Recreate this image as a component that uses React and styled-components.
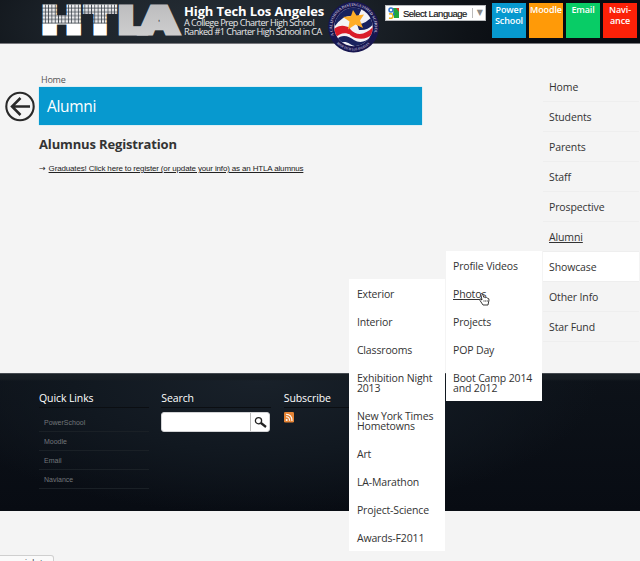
import React from "react";
import styled, { createGlobalStyle, css } from "styled-components";

const Global = createGlobalStyle`
  * { box-sizing: border-box; }
  html, body { margin: 0; padding: 0; overflow: hidden; }
  body { font-family: "Open Sans", "Noto Sans", sans-serif; color: #333; background: #f4f4f4; }
  ul { list-style: none; margin: 0; padding: 0; }
  h1, h2, h3, p { margin: 0; font-weight: 400; }
  a { color: inherit; text-decoration: none; }
`;

const Page = styled.div`
  position: relative;
  display: flex;
  flex-direction: column;
  width: 640px;
  height: 561px;
  overflow: hidden;
  background: #f4f4f4;
`;

const Header = styled.header`
  display: flex;
  align-items: flex-start;
  height: 44px;
  flex: none;
  padding-left: 42px;
  border-bottom: 1px solid #77777c;
  background: radial-gradient(ellipse 330px 130px at 205px 25px, #252d34 0%, #1d242b 42%, #0e1217 80%, #080b11 100%);
`;

const Logo = styled.svg`
  flex: none;
  width: 142px;
  height: 43px;
  overflow: visible;
`;

const Titles = styled.div`
  width: 144px;
  flex: none;
  padding-top: 4px;
  white-space: nowrap;
  color: #fff;
`;

const SchoolName = styled.h1`
  font-size: 13px;
  line-height: 14px;
  font-weight: 700;
  letter-spacing: -0.13px;
`;

const Tagline = styled.p`
  font-size: 9.2px;
  line-height: 9px;
  letter-spacing: -0.57px;
  color: #e8e8e8;
`;

const Seal = styled.svg`
  flex: none;
  width: 52px;
  height: 54px;
  position: relative;
  z-index: 2;
`;

const Language = styled.div`
  display: flex;
  flex: none;
  align-items: center;
  width: 101px;
  height: 16px;
  margin: 5px 6px 0 5px;
  padding-left: 2px;
  border: 1px solid #b8babd;
  background: #fff;
  font: 9.5px "Liberation Sans", Arial, sans-serif;
  letter-spacing: -0.5px;
  color: #111;
  -webkit-text-stroke: 0.15px #111;
  white-space: nowrap;
  svg { flex: none; width: 12px; height: 12px; margin-right: 3px; }
`;

const Arrow = styled.span`
  margin-left: 5px;
  padding-left: 4px;
  border-left: 1px solid #bbb;
  font: 8px/10px "DejaVu Sans", sans-serif;
  letter-spacing: 0;
  color: #888;
  -webkit-text-stroke: 0;
`;

const Tiles = styled.div`
  display: flex;
  flex: none;
  gap: 3px;
  padding-top: 3px;
`;

const Tile = styled.a`
  width: 34px;
  height: 35px;
  padding-top: 2px;
  background: ${(p) => p.$color};
  color: #fff;
  font-size: 9px;
  line-height: 10.5px;
  font-weight: 600;
  text-align: center;
  letter-spacing: -0.12px;
  white-space: nowrap;
`;

const Main = styled.main`
  display: flex;
  height: 329px;
  flex: none;
`;

const Back = styled.div`
  width: 39px;
  padding: 46px 0 0 4px;
  svg { display: block; width: 32px; height: 32px; }
`;

const Content = styled.section`
  width: 383px;
  padding-top: 30px;
`;

const Breadcrumb = styled.p`
  height: 13px;
  padding-left: 2px;
  font-size: 9px;
  line-height: 12px;
  letter-spacing: -0.25px;
  color: #555;
`;

const Banner = styled.h2`
  height: 38px;
  padding-left: 8px;
  background: #0799cf;
  box-shadow: 0 0 1px #6dd0ee;
  color: #fff;
  font-size: 15.5px;
  line-height: 38px;
  letter-spacing: -0.3px;
`;

const Heading = styled.h3`
  margin-top: 9px;
  font-size: 13px;
  line-height: 21px;
  font-weight: 700;
  letter-spacing: -0.15px;
`;

const Register = styled.p`
  display: flex;
  gap: 3px;
  margin-top: 8px;
  font: 8px/11px "Liberation Sans", Arial, sans-serif;
  letter-spacing: -0.15px;
  color: #222;
  white-space: nowrap;
  a { text-decoration: underline; }
  span { font-family: "DejaVu Sans", sans-serif; }
`;

const Nav = styled.nav`
  position: relative;
  width: 96px;
  margin: 28px 0 0 121px;
`;

const NavItem = styled.li`
  height: 30px;
  padding-left: 6px;
  font-size: 10.5px;
  line-height: 31px;
  letter-spacing: -0.12px;
  border-bottom: 1px solid #eeeeee;
  ${(p) => p.$open && css`background: #fff;`}
  ${(p) => p.$current && css`text-decoration: underline;`}
`;

const Flyout = styled.ul`
  position: absolute;
  right: 100%;
  top: ${(p) => p.$top}px;
  z-index: 3;
  width: 96px;
  margin-right: ${(p) => p.$gap}px;
  background: #fff;
`;

const FlyoutItem = styled.li`
  padding: 10px 0 8px 7.5px;
  font-size: 10.5px;
  line-height: 10px;
  letter-spacing: -0.15px;
  white-space: pre-line;
  ${(p) => p.$current && css`text-decoration: underline;`}
`;

const Cursor = styled.svg`
  position: absolute;
  left: -64px;
  top: 221px;
  z-index: 5;
  width: 11px;
  height: 13px;
`;

const Footer = styled.footer`
  display: flex;
  flex: none;
  height: 138px;
  padding: 16px 0 0 39px;
  border-top: 1px solid #454a50;
  background:
    linear-gradient(#181f25 0, #171d23 5px, transparent 7px),
    radial-gradient(ellipse 340px 135px at 260px 5px, #19212a 0%, #111820 55%, transparent 100%),
    linear-gradient(#0d1219, #080c13);
  color: #fff;
`;

const FooterColumn = styled.section`
  width: ${(p) => p.$width}px;
  margin-right: ${(p) => p.$gap}px;
`;

const FooterTitle = styled.h3`
  height: 18px;
  font-size: 10.5px;
  line-height: 17px;
  letter-spacing: -0.1px;
  border-bottom: 1px solid #0b0e12;
`;

const QuickLink = styled.li`
  height: 19px;
  padding-left: 5px;
  font: 7px/19px "Liberation Sans", Arial, sans-serif;
  color: #73777b;
  border-bottom: 1px solid #1a2026;
`;

const QuickList = styled.ul`
  padding-top: 5px;
`;

const SearchBox = styled.div`
  display: flex;
  width: 109px;
  height: 20px;
  margin-top: 4px;
  border: 1px solid #d2d3d5;
  border-radius: 3px;
  background: #fff;
`;

const SearchButton = styled.span`
  display: flex;
  width: 19px;
  margin-left: auto;
  border-left: 1px solid #bbb;
  align-items: center;
  justify-content: center;
  svg { width: 13px; height: 13px; }
`;

const Feed = styled.svg`
  display: block;
  width: 10px;
  height: 11px;
  margin-top: 4px;
`;

const StatusBar = styled.div`
  align-self: flex-start;
  width: 54px;
  height: 20px;
  margin-top: 44px;
  flex: none;
  padding: 2px 0 0 25px;
  border: 1px solid #cfcfcf;
  border-left: 0;
  border-radius: 0 3px 0 0;
  background: #fafafa;
  font: 9px/11px "Liberation Sans", Arial, sans-serif;
  letter-spacing: 0.4px;
  color: #444;
  white-space: nowrap;
`;

const tiles = [
  [["Power", "School"], "#0799cf"],
  [["Moodle"], "#ff9a08"],
  [["Email"], "#08cc66"],
  [["Navi-", "ance"], "#fb2108"],
];
const nav = ["Home", "Students", "Parents", "Staff", "Prospective", "Alumni", "Showcase", "Other Info", "Star Fund"];
const showcase = ["Profile Videos", "Photos", "Projects", "POP Day", "Boot Camp 2014\nand 2012"];
const photos = [
  "Exterior", "Interior", "Classrooms", "Exhibition Night\n2013", "New York Times\nHometowns",
  "Art", "LA-Marathon", "Project-Science", "Awards-F2011",
];
const quickLinks = ["PowerSchool", "Moodle", "Email", "Naviance"];
const meshRows = [0, 1, 2, 3, 4];

function HtlaLogo() {
  return (
    <Logo viewBox="42 0 142 43" fontFamily="Inter, sans-serif" fontWeight="900" fontSize="38.6">
      <defs>
        <pattern id="mesh" x="42.4" y="4.6" width="3.3" height="40" patternUnits="userSpaceOnUse">
          <rect width="3.3" height="40" fill="#3c444c" />
          {meshRows.map((r) => (
            <rect key={r} y={r * 3.8} width="2.5" height="3" fill="#ececee" />
          ))}
          <rect y="19" width="3.3" height="21" fill="#fff" />
        </pattern>
        <linearGradient id="silver" gradientUnits="userSpaceOnUse" x1="0" y1="5" x2="0" y2="36">
          <stop offset="0" stopColor="#bdbdbf" />
          <stop offset="1" stopColor="#cecece" />
        </linearGradient>
      </defs>
      <g fill="url(#mesh)" stroke="url(#mesh)" strokeWidth="3">
        <text x="42" y="34.4" textLength="39.4" lengthAdjust="spacingAndGlyphs">H</text>
        <text x="83.6" y="34.4" textLength="33.2" lengthAdjust="spacingAndGlyphs">T</text>
      </g>
      <g fill="url(#silver)" stroke="url(#silver)" strokeWidth="3.2">
        <text x="118.5" y="34.4" textLength="29" lengthAdjust="spacingAndGlyphs">L</text>
        <text x="138.5" y="34.4" textLength="41.5" lengthAdjust="spacingAndGlyphs">A</text>
      </g>
    </Logo>
  );
}

function SchoolSeal() {
  return (
    <Seal viewBox="0 0 52 54">
      <defs>
        <clipPath id="disc"><circle cx="25.5" cy="27" r="19.2" /></clipPath>
        <path id="arcTop" d="M6 35.5 A21.2 21.2 0 1 1 45 35.5" />
        <path id="arcBottom" d="M8.8 43.5 A23.5 23.5 0 0 0 42.2 43.5" />
      </defs>
      <circle cx="25.5" cy="27" r="25.4" fill="#17164f" />
      <g clipPath="url(#disc)">
        <rect width="52" height="54" fill="#f3f3f6" />
        <path d="M5 14Q16 2 34 8L30 17Q17 12 7 26Z" fill="#19235f" />
        <path d="M29 24Q38 25 46 14L47 22Q41 31 31 30Z" fill="#19235f" />
        <path d="M4 31C10 24 17 25 22 28L23 35C17 32 12 33 7 38Z" fill="#da1c29" />
        <path d="M22 29C30 38 39 34 47 25V32C40 40 30 41 22 35Z" fill="#da1c29" />
        <path d="M8 40C15 33 21 37 26 40S37 43 44 36L40 45C33 48 27 47 22 44S14 42 11 44Z" fill="#19235f" />
      </g>
      <path d="M25 10L28.5 15.5L36 14.5L32 20.5L35 28L27.5 24.5L20 29.5L21.5 21.5L15 17L23 16Z" fill="#ffad27" />
      <g fill="#bcb5cf" fontFamily="Liberation Serif, serif" fontSize="4.1" fontWeight="700">
        <text><textPath href="#arcTop" textLength="81">A CALIFORNIA DISTINGUISHED SCHOOL</textPath></text>
        <text fontSize="3.5"><textPath href="#arcBottom" textLength="36" lengthAdjust="spacingAndGlyphs">HIGH TECH LOS ANGELES</textPath></text>
      </g>
    </Seal>
  );
}

export default function App() {
  return (
    <Page>
      <Global />
      <Header>
        <HtlaLogo />
        <Titles>
          <SchoolName>High Tech Los Angeles</SchoolName>
          <Tagline>A College Prep Charter High School</Tagline>
          <Tagline>Ranked #1 Charter High School in CA</Tagline>
        </Titles>
        <SchoolSeal />
        <Language>
          <svg viewBox="0 0 12 12">
            <path d="M5 1h6v10H6z" fill="#20a63b" />
            <path d="M8 1h3v4z" fill="#d93828" />
            <circle cx="3" cy="3" r="2" fill="none" stroke="#3575ce" strokeWidth="1.5" />
            <path d="M1 7q4-1 4 2t-4 2" fill="none" stroke="#efb51d" strokeWidth="1.6" />
            <path d="M5 5l2 2-2 2" fill="#2673d9" />
          </svg>
          Select Language<Arrow>▼</Arrow>
        </Language>
        <Tiles>
          {tiles.map(([lines, color]) => (
            <Tile key={color} $color={color}>{lines.map((l) => <div key={l}>{l}</div>)}</Tile>
          ))}
        </Tiles>
      </Header>
      <Main>
        <Back>
          <svg viewBox="0 0 32 32" fill="none" stroke="#292929">
            <circle cx="16" cy="16.5" r="13.7" strokeWidth="2.1" />
            <path d="M26 16.5H8M16.5 8L8 16.5l8.5 8.5" strokeWidth="2.5" />
          </svg>
        </Back>
        <Content>
          <Breadcrumb>Home</Breadcrumb>
          <Banner>Alumni</Banner>
          <Heading>Alumnus Registration</Heading>
          <Register><span>→</span><a>Graduates! Click here to register (or update your info) as an HTLA alumnus</a></Register>
        </Content>
        <Nav>
          <ul>
            {nav.map((n) => <NavItem key={n} $open={n === "Showcase"} $current={n === "Alumni"}>{n}</NavItem>)}
          </ul>
          <Flyout $top={179} $gap={1.5}>
            {showcase.map((s) => <FlyoutItem key={s} $current={s === "Photos"}>{s}</FlyoutItem>)}
          </Flyout>
          <Flyout $top={207} $gap={97.6}>
            {photos.map((s) => <FlyoutItem key={s}>{s}</FlyoutItem>)}
          </Flyout>
          <Cursor viewBox="0 0 11 13">
            <path d="M3 7L1 5.8Q0 6 1 7.5L4 12h5l1-5Q10 5 8.5 5.2 7.5 4 6.5 4.6 5.5 3.8 4.8 4.3L3.5 1Q2 0 1.8 1.4Z" fill="#fff" stroke="#222" strokeWidth=".9" />
            <path d="M5 7v2M6.7 7v2M8.3 7v2" stroke="#444" strokeWidth=".6" />
          </Cursor>
        </Nav>
      </Main>
      <Footer>
        <FooterColumn $width={110} $gap={12.3}>
          <FooterTitle>Quick Links</FooterTitle>
          <QuickList>{quickLinks.map((q) => <QuickLink key={q}>{q}</QuickLink>)}</QuickList>
        </FooterColumn>
        <FooterColumn $width={110} $gap={12.5}>
          <FooterTitle>Search</FooterTitle>
          <SearchBox>
            <SearchButton>
              <svg viewBox="0 0 13 13" fill="none" stroke="#222">
                <circle cx="4.5" cy="4.7" r="3.1" strokeWidth="1.3" />
                <path d="M7 7l5 4" strokeWidth="2.3" />
              </svg>
            </SearchButton>
          </SearchBox>
        </FooterColumn>
        <FooterColumn $width={110} $gap={0}>
          <FooterTitle>Subscribe</FooterTitle>
          <Feed viewBox="0 0 10 11">
            <rect width="10" height="10.5" rx="1.3" fill="#e58435" />
            <circle cx="2.7" cy="8" r="1" fill="#fff" />
            <path d="M2 4.8q3.6 0 3.6 4M2 2.3q6 0 6 6.6" fill="none" stroke="#fff" strokeWidth="1.1" />
          </Feed>
        </FooterColumn>
      </Footer>
      <StatusBar>islet</StatusBar>
    </Page>
  );
}
